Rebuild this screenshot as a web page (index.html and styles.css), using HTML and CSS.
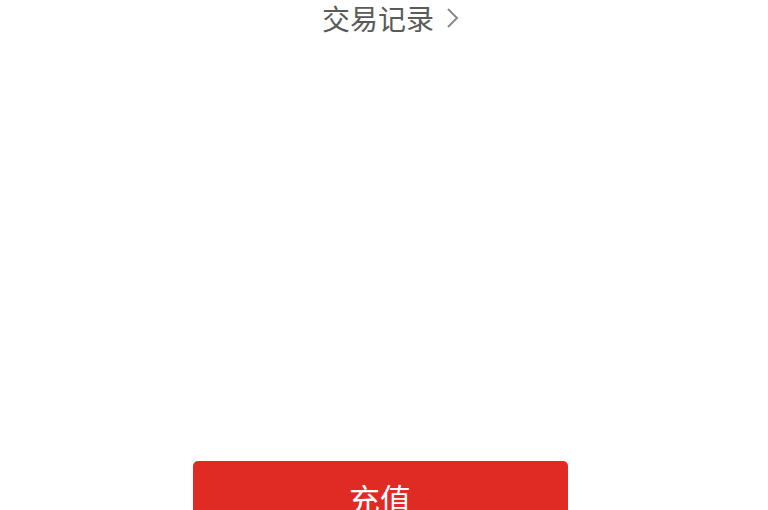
FILE: index.html
```html
<!DOCTYPE html>
<html lang="zh-CN">
<head>
    <meta charset="UTF-8">
    <meta name="viewport" content="width=device-width, initial-scale=1.0">
    <title>钱包</title>
    <link rel="stylesheet" href="styles.css">
</head>
<body>
    <div class="page">
        <a class="records" href="#">交易记录<span class="chevron">
            <svg width="14" height="22" viewBox="0 0 14 22"><path d="M2 2 L11 11 L2 20" fill="none" stroke="#8a8a8a" stroke-width="2"/></svg>
        </span></a>
        <div class="spacer"></div>
        <button class="btn-recharge">充值</button>
    </div>
</body>
</html>
```

FILE: styles.css
```css
body {
    margin: 0;
    background-color: #fff;
    font-family: "Noto Sans CJK SC", "Noto Sans", sans-serif;
}

.page {
    display: flex;
    flex-direction: column;
    align-items: center;
    height: 510px;
    overflow: hidden;
}

.records {
    display: flex;
    align-items: center;
    flex-shrink: 0;
    height: 36px;
    margin-left: 14px;
    font-size: 28px;
    line-height: 36px;
    color: #5a5a5a;
    text-decoration: none;
}

.chevron {
    display: flex;
    margin-left: 12px;
}

.spacer {
    flex-shrink: 0;
    height: 425px;
}

.btn-recharge {
    display: flex;
    justify-content: center;
    align-items: flex-start;
    flex-shrink: 0;
    width: 375px;
    height: 90px;
    margin-right: 8px;
    padding: 17px 0 0;
    border: none;
    border-radius: 5px;
    background-color: #e02b25;
    color: #fff;
    font-family: inherit;
    font-size: 31px;
    line-height: 40px;
}
```
